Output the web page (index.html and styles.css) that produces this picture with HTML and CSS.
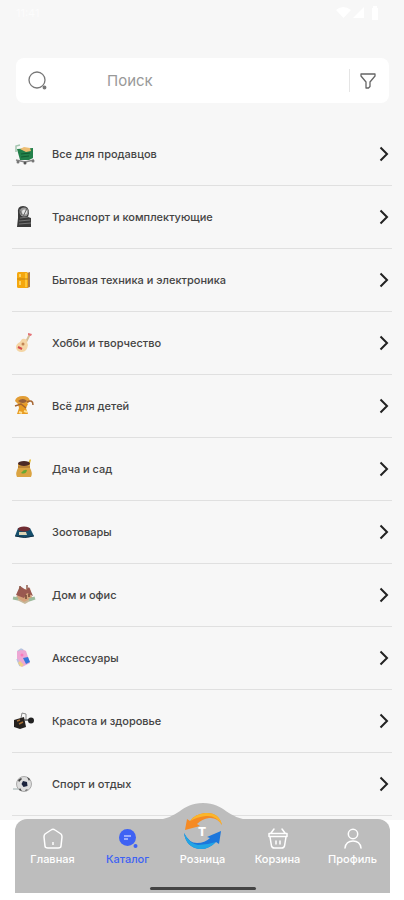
FILE: index.html
```html
<!DOCTYPE html>
<html lang="ru">
<head>
    <meta charset="UTF-8">
    <meta name="viewport" content="width=device-width, initial-scale=1.0">
    <title>Каталог</title>
    <link rel="stylesheet" href="styles.css">
</head>
<body>
    <div class="screen">
        <header class="status-bar">
            <span class="time">11:41</span>
            <svg width="44" height="14" viewBox="0 0 44 14" fill="#fff">
                <path d="M0 4Q7-2 15 4L7.500 12z"/>
                <path d="M28 1v11H17z"/>
                <path d="M36 2h1V0h4v2h1v12h-6z"/>
            </svg>
        </header>

        <form class="search">
            <svg width="20" height="20" viewBox="0 0 20 20" fill="none" stroke="#777" stroke-width="1.300">
                <circle cx="9" cy="9" r="8"/>
                <circle cx="16.500" cy="16.500" r="1.300" fill="#777"/>
            </svg>
            <input type="search" placeholder="Поиск" aria-label="Поиск">
            <button type="button" class="filter" aria-label="Фильтр">
                <svg width="16" height="16" viewBox="0 0 16 16" fill="none" stroke="#666" stroke-width="1.300" stroke-linejoin="round">
                    <path d="M1 1h14v2L10 9v4.500L8.500 15H6V9L1 3z"/>
                </svg>
            </button>
        </form>

        <main>
            <ul class="catalog">
                <li><a href="#">
                    <svg class="pic" viewBox="0 0 24 24">
                        <path d="M4 10V4L8 3" fill="none" stroke="#a3c5ae" stroke-width="1.500"/>
                        <path d="M5 7l16-1v10l-4 2H8z" fill="#23804a"/>
                        <path d="M8 7l4-2 6 1 1 3-5 1z" fill="#edbd73"/>
                        <path d="M9 12l9-1M9 15l8-1" stroke="#125c31"/>
                        <path d="M4 18l9 2 9-2" fill="none" stroke="#888" stroke-width="1.500"/>
                        <circle cx="6" cy="20" r="1.500" fill="#777"/><circle cx="13" cy="21" r="1.500" fill="#555"/><circle cx="21" cy="19" r="1.500" fill="#777"/>
                    </svg>
                    <span>Все для продавцов</span>
                    <svg class="arrow" viewBox="0 0 10 16"><path d="M1.500 1.500L8 8l-6.500 6.500"/></svg>
                </a></li>
                <li><a href="#">
                    <svg class="pic" viewBox="0 0 24 24">
                        <path d="M6 8Q5 1 11 1q6 0 6 7l-1 4 3 1v9H5l1-9z" fill="#3a3a3a"/>
                        <circle cx="12" cy="7" r="4.500" fill="#999"/><circle cx="12.500" cy="7" r="2.500" fill="#e5e5e5"/>
                        <path d="M8 13l8-1M7 16l11-1M7 19l12-1" stroke="#777"/>
                        <path d="M7 4l3 6M15 3l-4 9" stroke="#666"/>
                    </svg>
                    <span>Транспорт и комплектующие</span>
                    <svg class="arrow" viewBox="0 0 10 16"><path d="M1.500 1.500L8 8l-6.500 6.500"/></svg>
                </a></li>
                <li><a href="#">
                    <svg class="pic" viewBox="0 0 24 24">
                        <path d="M15 5l3-1v15l-3 1z" fill="#b07d45"/>
                        <rect x="5" y="4" width="11" height="16" rx="1.500" fill="#f5a70e"/>
                        <path d="M14 5v14" stroke="#ffc737" stroke-width="2"/>
                        <path d="M5 11h11" stroke="#c58410"/>
                        <path d="M8 6v3M8 13v4" stroke="#ffe27d" stroke-width="1.500"/>
                    </svg>
                    <span>Бытовая техника и электроника</span>
                    <svg class="arrow" viewBox="0 0 10 16"><path d="M1.500 1.500L8 8l-6.500 6.500"/></svg>
                </a></li>
                <li><a href="#">
                    <svg class="pic" viewBox="0 0 24 24">
                        <path d="M13 13l5-10" stroke="#d5bf98" stroke-width="2"/>
                        <path d="M16 2l4 1-1 2-3-1z" fill="#e57378"/>
                        <path d="M10 8q5-1 5 3l1 3q-1 7-6 7-6 0-6-5 0-3 4-5z" fill="#f4d6a6"/>
                        <circle cx="11" cy="13" r="1.500" fill="#c18554"/>
                        <path d="M6 16l4 2" stroke="#d74c4c" stroke-width="2"/>
                    </svg>
                    <span>Хобби и творчество</span>
                    <svg class="arrow" viewBox="0 0 10 16"><path d="M1.500 1.500L8 8l-6.500 6.500"/></svg>
                </a></li>
                <li><a href="#">
                    <svg class="pic" viewBox="0 0 24 24">
                        <path d="M3 7q1-5 8-5 6 0 7 5l-3 3H6z" fill="#e29d35"/>
                        <path d="M6 7q5-4 9 0-4 4-9 0z" fill="#96603b"/>
                        <path d="M6 10h10l-2 4 2 6H5l2-6z" fill="#e89b22"/>
                        <path d="M3 12l6-2 5 4M15 8q6-3 6 3" fill="none" stroke="#a56430" stroke-width="1.500"/>
                        <path d="M7 18l3 1M12 17l3 1" stroke="#ffe092" stroke-width="2"/>
                    </svg>
                    <span>Всё для детей</span>
                    <svg class="arrow" viewBox="0 0 10 16"><path d="M1.500 1.500L8 8l-6.500 6.500"/></svg>
                </a></li>
                <li><a href="#">
                    <svg class="pic" viewBox="0 0 24 24">
                        <path d="M15 8l3-6 1 1-2 7z" fill="#e3b92e"/>
                        <path d="M6 7h12v4q3 5 1 9H5q-2-4 1-9z" fill="#dba442"/>
                        <ellipse cx="12" cy="6.500" rx="6" ry="2.500" fill="#4b2925"/>
                        <path d="M6 10h12" stroke="#9d672e"/>
                        <path d="M9 16q3-4 6-3-1 5-6 3z" fill="#67a832"/>
                    </svg>
                    <span>Дача и сад</span>
                    <svg class="arrow" viewBox="0 0 10 16"><path d="M1.500 1.500L8 8l-6.500 6.500"/></svg>
                </a></li>
                <li><a href="#">
                    <svg class="pic" viewBox="0 0 24 24">
                        <path d="M6 8h12l4 8q-10 3-19 0z" fill="#164f6c"/>
                        <ellipse cx="12" cy="9" rx="6" ry="2.500" fill="#702c32"/>
                        <path d="M7 12h7l1 3H7z" fill="#ddd5b6"/>
                        <path d="M3 16q10 3 19 0" fill="none" stroke="#102e43"/>
                    </svg>
                    <span>Зоотовары</span>
                    <svg class="arrow" viewBox="0 0 10 16"><path d="M1.500 1.500L8 8l-6.500 6.500"/></svg>
                </a></li>
                <li><a href="#">
                    <svg class="pic" viewBox="0 0 24 24">
                        <path d="M1 15l9-4 13 4-10 6z" fill="#c6b89a"/>
                        <path d="M6 8l12-3 2 10-8 4-7-4z" fill="#d5a17b"/>
                        <path d="M4 12l4-9 6 4 3-3 4 9-6-3-3 5z" fill="#9a5850"/>
                        <path d="M8 3v4M15 2v4" stroke="#8f5e4c" stroke-width="1.500"/>
                        <path d="M14 12v4M17 11v3" stroke="#714535" stroke-width="1.500"/>
                        <path d="M1 15l5 1M17 17l6-2" stroke="#9dbb9c" stroke-width="3"/>
                    </svg>
                    <span>Дом и офис</span>
                    <svg class="arrow" viewBox="0 0 10 16"><path d="M1.500 1.500L8 8l-6.500 6.500"/></svg>
                </a></li>
                <li><a href="#">
                    <svg class="pic" viewBox="0 0 24 24">
                        <path d="M5 5l5-2 4 2 4 12-8 4-5-7z" fill="#eda7d4"/>
                        <path d="M6 5l3-2 2 1M5 13l3 7" fill="none" stroke="#b5c4df" stroke-width="1.500"/>
                        <path d="M11 12l5-1 2 5-4 2z" fill="#3777db"/>
                        <path d="M8 15l4 4-3 2-3-4z" fill="#f0cf87"/>
                        <circle cx="10" cy="9" r="1.500" fill="#fa79bc"/>
                    </svg>
                    <span>Аксессуары</span>
                    <svg class="arrow" viewBox="0 0 10 16"><path d="M1.500 1.500L8 8l-6.500 6.500"/></svg>
                </a></li>
                <li><a href="#">
                    <svg class="pic" viewBox="0 0 24 24">
                        <path d="M9 9l1-5 4 1v5" fill="none" stroke="#888"/>
                        <path d="M2 11l10-3 2 10-6 2-6-2z" fill="#25211f"/>
                        <path d="M5 12l3-1M7 15l4-2" stroke="#a56f36" stroke-width="1.500"/>
                        <path d="M12 11h7" stroke="#555" stroke-width="1.500"/>
                        <circle cx="19" cy="11.500" r="3" fill="#222"/>
                    </svg>
                    <span>Красота и здоровье</span>
                    <svg class="arrow" viewBox="0 0 10 16"><path d="M1.500 1.500L8 8l-6.500 6.500"/></svg>
                </a></li>
                <li><a href="#">
                    <svg class="pic" viewBox="0 0 24 24">
                        <path d="M1 17h6" stroke="#c9d2d2" stroke-width="2"/>
                        <circle cx="12" cy="12" r="7.500" fill="#ddd" stroke="#aaa"/>
                        <path d="M11 9l4 1 .500 4-4 1-2-3z" fill="#19213b"/>
                        <path d="M6 8l3-2 1 1-3 3zM15 5l3 2-1 2zM8 16l2 3-3-1zM13 18l3-1-2 2z" fill="#454545"/>
                    </svg>
                    <span>Спорт и отдых</span>
                    <svg class="arrow" viewBox="0 0 10 16"><path d="M1.500 1.500L8 8l-6.500 6.500"/></svg>
                </a></li>
            </ul>
        </main>
    </div>

    <nav class="tabs">
        <svg class="bump" width="96" height="17" viewBox="0 0 96 17"><path d="M0 17C24 16 26 0 48 0s24 16 48 17z" fill="#bdbdbd"/></svg>
        <a href="#">
            <svg width="24" height="24" viewBox="0 0 24 24" fill="none" stroke="#fff" stroke-width="1.500" stroke-linejoin="round">
                <path d="M3 10q0-2 1-3l6-4q2-1.500 4 0l6 4q1 1 1 3l-1 9q0 2-3 2H7q-3 0-3-2z"/><path d="M12 15v3"/>
            </svg>
            <span>Главная</span>
        </a>
        <a href="#" class="active">
            <svg width="24" height="24" viewBox="0 0 24 24" fill="#3e62f4">
                <circle cx="11.500" cy="10.500" r="8.500"/><circle cx="19.500" cy="19" r="2"/>
                <path d="M8 9h7M8 12h4" stroke="#b9c5ff" stroke-width="1.500"/>
            </svg>
            <span>Каталог</span>
        </a>
        <a href="#" class="retail">
            <svg width="42" height="40" viewBox="0 0 42 40">
                <path d="M3 19L5 8l3 2Q13 3 23 2q14-1 17 12-5-8-13-7-7 1-12 6l3 2z" fill="#f58a24"/>
                <path d="M8 10Q13 3 23 2q14-1 17 12Q34 4 24 5 15 6 8 10z" fill="#fbb62b"/>
                <path d="M39 20l-2 13-3-2q-8 8-17 7Q4 36 2 22q5 10 13 10 8 0 13-5l-3-1z" fill="#1b76dc"/>
                <path d="M34 31q-8 8-17 7Q4 36 2 22q6 11 14 12 9 0 18-3z" fill="#22a5e4"/>
                <text x="20" y="25" text-anchor="middle">Т</text>
            </svg>
            <span>Розница</span>
        </a>
        <a href="#">
            <svg width="24" height="24" viewBox="0 0 24 24" fill="none" stroke="#fff" stroke-width="1.500" stroke-linecap="round" stroke-linejoin="round">
                <path d="M8 2L5 6M16 2l3 4M3 6.500h18v3H3zM4 10l1.500 9q.500 2 3 2h7q2.500 0 3-2L20 10M10 14v3M14 14v3"/>
            </svg>
            <span>Корзина</span>
        </a>
        <a href="#">
            <svg width="24" height="24" viewBox="0 0 24 24" fill="none" stroke="#fff" stroke-width="1.500" stroke-linecap="round">
                <circle cx="12" cy="7" r="4.700"/><path d="M4 21q1-7 8-7t8 7"/>
            </svg>
            <span>Профиль</span>
        </a>
        <div class="home-line"></div>
    </nav>
</body>
</html>
```

FILE: styles.css
```css
* {
    box-sizing: border-box;
}

body {
    margin: 0;
    background: #fff;
    color: #444;
    font-family: Inter, Roboto, sans-serif;
}

a {
    color: inherit;
    text-decoration: none;
}

.screen {
    background: #f7f7f7;
    padding-bottom: 4px;
}

/* Status bar */
.status-bar {
    display: flex;
    justify-content: space-between;
    align-items: center;
    height: 26px;
    padding: 0 24px 0 16px;
    margin-bottom: 32px;
}

.time {
    font-size: 11px;
    color: #fcfcfc;
}

/* Search */
.search {
    display: flex;
    align-items: center;
    height: 45px;
    margin: 0 15px 20px 16px;
    padding-left: 12px;
    background: #fff;
    border-radius: 8px;
}

.search input {
    flex: 1;
    min-width: 0;
    margin-left: 59px;
    padding: 0;
    border: none;
    outline: none;
    background: none;
    font-family: inherit;
    font-size: 15px;
    color: #333;
}

.search input::placeholder {
    color: #999;
}

.filter {
    display: flex;
    align-items: center;
    justify-content: center;
    width: 40px;
    height: 23px;
    padding: 0 4px 0 0;
    border: none;
    border-left: 1px solid #e5e5e5;
    background: none;
    cursor: pointer;
}

/* Catalog list */
.catalog {
    list-style: none;
    margin: 0 12px;
    padding: 0;
}

.catalog a {
    display: flex;
    align-items: center;
    height: 63px;
    padding-right: 3px;
    border-bottom: 1px solid #e0e0e0;
    font-size: 11px;
    font-weight: 500;
}

.catalog span {
    flex: 1;
    margin-left: 16px;
}

.pic {
    width: 24px;
    height: 24px;
}

.arrow {
    width: 10px;
    height: 16px;
    fill: none;
    stroke: #222;
    stroke-width: 2;
}

/* Bottom tabs */
.tabs {
    position: relative;
    display: flex;
    height: 74px;
    margin: -1px 14px 0 15px;
    background: #bdbdbd;
    border-radius: 12px 12px 0 0;
    color: #fff;
    font-size: 11px;
    font-weight: 500;
    line-height: 16px;
}

.tabs a {
    position: relative;
    flex: 1 1 0;
    min-width: 0;
    display: flex;
    flex-direction: column;
    align-items: center;
    padding-top: 8px;
}

.tabs a.active {
    color: #3e62f4;
}

.tabs a.retail {
    padding-top: 0;
}

.retail svg {
    margin-top: -8px;
}

.retail text {
    fill: #fff;
    font-size: 12px;
    font-weight: 800;
}

.bump {
    position: absolute;
    left: 50%;
    top: -16px;
    margin-left: -48px;
}

.home-line {
    position: absolute;
    left: 50%;
    bottom: 3px;
    width: 106px;
    height: 3px;
    margin-left: -53px;
    background: #444;
    border-radius: 2px;
}
```
